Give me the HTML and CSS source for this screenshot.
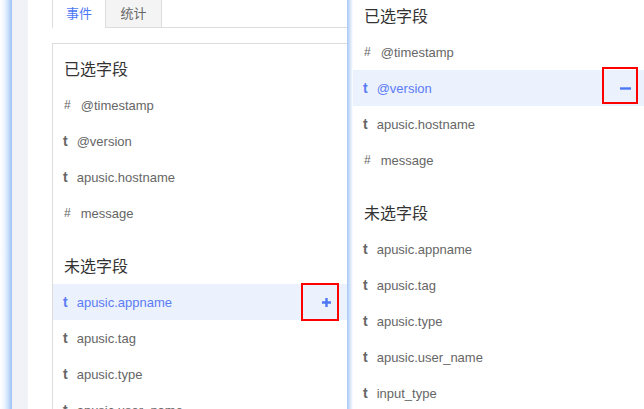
FILE: index.html
```html
<!DOCTYPE html>
<html lang="zh">
<head>
    <meta charset="UTF-8">
    <meta name="viewport" content="width=device-width, initial-scale=1">
    <title>字段选择</title>
    <link rel="stylesheet" href="styles.css">
</head>
<body>
    <div class="edge"></div>
    <div class="side"></div>

    <main class="main">
        <div class="tabs">
            <div class="tab active">事件</div>
            <div class="tab">统计</div>
        </div>

        <div class="box">
            <div class="group-title">已选字段</div>
            <ul class="fields">
                <li class="field"><span class="type num">#</span>@timestamp</li>
                <li class="field"><span class="type">t</span>@version</li>
                <li class="field"><span class="type">t</span>apusic.hostname</li>
                <li class="field"><span class="type num">#</span>message</li>
            </ul>

            <div class="group-title gap">未选字段</div>
            <ul class="fields">
                <li class="field hover">
                    <span class="type">t</span>apusic.appname
                    <svg class="act plus" width="9" height="9" viewBox="0 0 9 9"><path d="M4.5 0v9M0 4.5h9" stroke="#4d78f4" stroke-width="2.4"/></svg>
                    <span class="mark mark-left"></span>
                </li>
                <li class="field"><span class="type">t</span>apusic.tag</li>
                <li class="field"><span class="type">t</span>apusic.type</li>
                <li class="field"><span class="type">t</span>apusic.user_name</li>
            </ul>
        </div>
    </main>

    <div class="divider"></div>

    <!-- 右侧抽屉 -->
    <aside class="drawer">
        <div class="group-title">已选字段</div>
        <ul class="fields">
            <li class="field"><span class="type num">#</span>@timestamp</li>
            <li class="field hover">
                <span class="type">t</span>@version
                <svg class="act minus" width="11" height="3" viewBox="0 0 11 3"><path d="M0 1.5h11" stroke="#4d78f4" stroke-width="2.4"/></svg>
                <span class="mark mark-right"></span>
            </li>
            <li class="field"><span class="type">t</span>apusic.hostname</li>
            <li class="field"><span class="type num">#</span>message</li>
        </ul>

        <div class="group-title gap">未选字段</div>
        <ul class="fields">
            <li class="field"><span class="type">t</span>apusic.appname</li>
            <li class="field"><span class="type">t</span>apusic.tag</li>
            <li class="field"><span class="type">t</span>apusic.type</li>
            <li class="field"><span class="type">t</span>apusic.user_name</li>
            <li class="field"><span class="type">t</span>input_type</li>
        </ul>
    </aside>
</body>
</html>
```

FILE: styles.css
```css
html, body {
    height: 100%;
}

body {
    font-family: "Liberation Sans", "Noto Sans CJK SC", sans-serif;
    font-size: 13px;
    color: #666;
    margin: 0;
    padding: 0;
    display: flex;
    overflow: hidden;
    background: #fff;
}

.edge {
    width: 12px;
    flex: none;
    background: linear-gradient(to right, #fff 0, #eef5fe 35%, #cfe2fb 65%, #b3d1f8 82%, #9fc3f5 100%);
}

.side {
    width: 16px;
    flex: none;
    background-color: #f0f2f7;
}

.main {
    width: 295px;
    flex: none;
    padding-left: 24px;
    overflow: hidden;
}

.tabs {
    display: flex;
    margin-top: -1px;
    border-bottom: 1px solid #ddd;
}

.tab {
    height: 27px;
    line-height: 27px;
    text-align: center;
    border: 1px solid #ddd;
    border-bottom: none;
    color: #666;
    background-color: #f4f4f4;
}

.tab:first-child {
    width: 52px;
}

.tab + .tab {
    width: 55px;
    margin-left: -1px;
}

.tab.active {
    color: #4d78f4;
    background-color: #fff;
    margin-bottom: -1px;
    height: 28px;
}

.box {
    margin-top: 15px;
    border: 1px solid #ddd;
    border-right: none;
    border-bottom: none;
    padding-top: 8px;
    min-height: 400px;
}

.group-title {
    height: 35px;
    line-height: 35px;
    padding: 0 11px;
    font-size: 16px;
    color: #333;
}

.group-title.gap {
    margin-top: 18px;
}

.fields {
    list-style: none;
    margin: 0;
    padding: 0;
}

.field {
    position: relative;
    display: flex;
    align-items: center;
    height: 36px;
    padding: 0 16px 0 10px;
    white-space: nowrap;
}

.type {
    font-weight: bold;
    font-size: 14px;
    margin-right: 9px;
    color: #666;
}

.type.num {
    font-weight: normal;
    font-size: 12px;
    margin-left: 1px;
    margin-right: 10px;
}

.field.hover {
    background-color: #ebf1fd;
    color: #5b7cf4;
}

.field.hover .type {
    color: #5b7cf4;
}

.act {
    margin-left: auto;
    display: block;
}

/* 标注框 */
.mark {
    position: absolute;
    border: 2px solid #f00;
    box-sizing: border-box;
}

.mark-left {
    right: 8px;
    top: -1px;
    width: 38px;
    height: 38px;
}

.mark-right {
    right: 6px;
    top: -3px;
    width: 36px;
    height: 37px;
}

.divider {
    width: 6px;
    flex: none;
    background: linear-gradient(to right, #a6c7f5 0, #c4dbfa 35%, #e4eefd 70%, #fff 100%);
}

.drawer {
    flex: 1;
    overflow: hidden;
}

.drawer > .group-title:first-child {
    margin-top: -1px;
}

.drawer .field {
    padding-right: 13px;
}
```
